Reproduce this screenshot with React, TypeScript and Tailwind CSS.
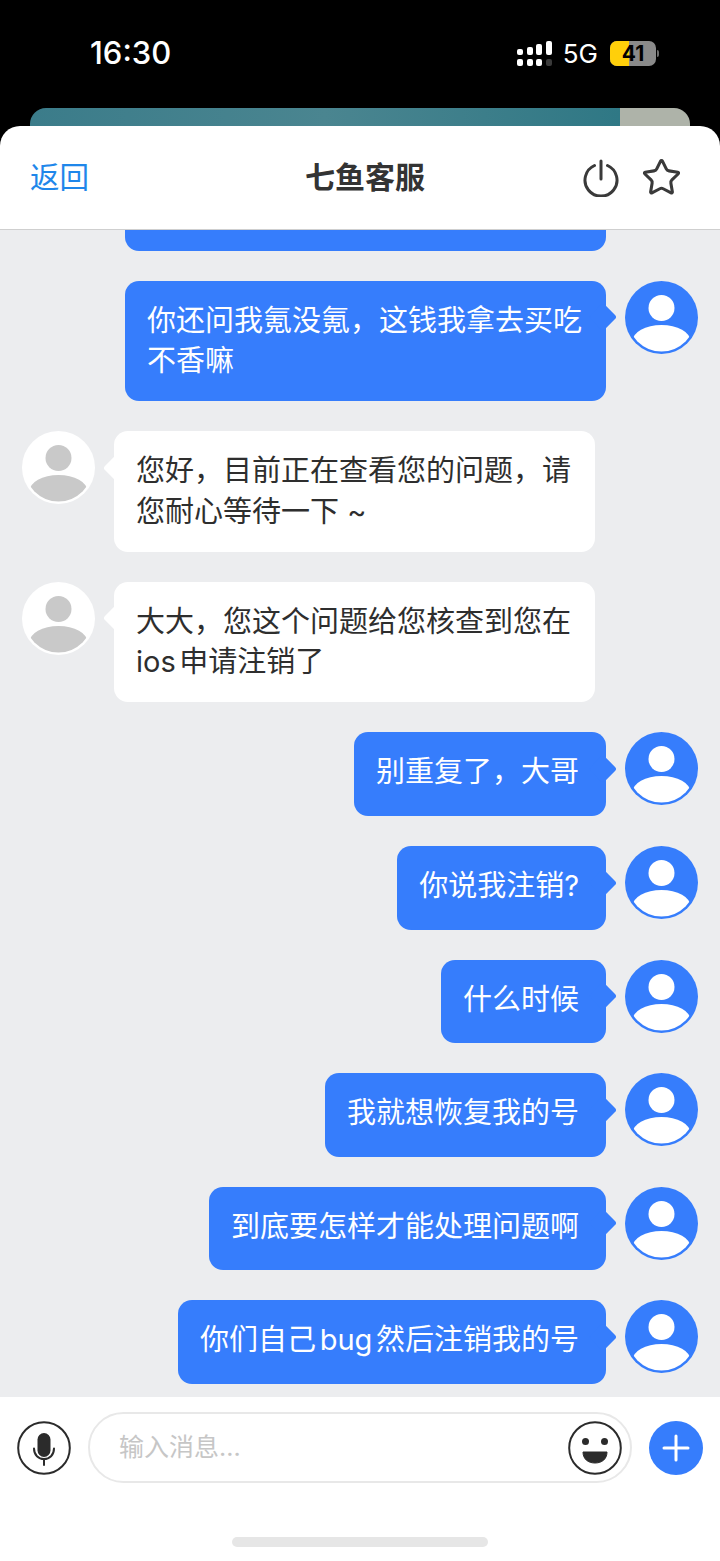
import React from "react";
import { Star } from "lucide-react";

const font = { fontFamily: '"Inter", "Noto Sans CJK SC", sans-serif' };

interface Message {
  id: number;
  from: "me" | "agent";
  text: string;
  full?: boolean;
}

const messages: Message[] = [
  { id: 1, from: "me", text: "你还问我氪没氪，这钱我拿去买吃不香嘛", full: true },
  { id: 2, from: "agent", text: "您好，目前正在查看您的问题，请您耐心等待一下 ~", full: true },
  { id: 3, from: "agent", text: "大大，您这个问题给您核查到您在ios申请注销了", full: true },
  { id: 4, from: "me", text: "别重复了，大哥" },
  { id: 5, from: "me", text: "你说我注销?" },
  { id: 6, from: "me", text: "什么时候" },
  { id: 7, from: "me", text: "我就想恢复我的号" },
  { id: 8, from: "me", text: "到底要怎样才能处理问题啊" },
  { id: 9, from: "me", text: "你们自己bug然后注销我的号" },
];

const Avatar = ({ mine }: { mine: boolean }) => (
  <svg width="73" height="73" viewBox="0 0 73 73" className="shrink-0">
    <defs>
      <clipPath id={mine ? "clip-me" : "clip-agent"}>
        <circle cx="36.5" cy="36.5" r="34" />
      </clipPath>
    </defs>
    <circle cx="36.5" cy="36.5" r="36.5" fill={mine ? "#367dfc" : "#ffffff"} />
    <circle cx="36.5" cy="27" r="13" fill={mine ? "#ffffff" : "#c9c9c9"} />
    <ellipse
      cx="36.5"
      cy="60"
      rx="29"
      ry="16"
      fill={mine ? "#ffffff" : "#c9c9c9"}
      clipPath={mine ? "url(#clip-me)" : "url(#clip-agent)"}
    />
  </svg>
);

const Bubble = ({ message }: { message: Message }) => {
  const mine = message.from === "me";
  return (
    <div className={`flex items-start ${mine ? "justify-end pl-[22px] pr-[22px]" : "pl-[22px]"}`}>
      {!mine && <Avatar mine={false} />}
      <div
        className={`relative min-h-[83.6px] rounded-[14px] pt-[20px] pb-[19.5px] pl-[22px] text-[29px] leading-[40.5px] [text-autospace:normal] ${
          message.full ? "w-[481px]" : "pr-[27px]"
        } ${mine ? "mr-[19px] bg-[#367dfc] text-white" : "ml-[19px] bg-white text-[#2e2e2e]"}`}
      >
        <span
          className={`absolute top-[26.5px] h-[20px] w-[20px] rotate-45 rounded-[3px] ${
            mine ? "right-[-7px] bg-[#367dfc]" : "left-[-7px] bg-white"
          }`}
        />
        <span className="relative">{message.text}</span>
      </div>
      {mine && <Avatar mine={true} />}
    </div>
  );
};

const SignalBars = () => (
  <div className="flex items-end gap-[3.5px]">
    {[6, 8, 11, 14].map((h, i) => (
      <div key={h} className="flex w-[6px] flex-col gap-[4px]">
        <div className="rounded-[2px] bg-white" style={{ height: h }} />
        <div className={`h-[7px] rounded-[2px] ${i === 3 ? "bg-[#3a3a3a]" : "bg-white"}`} />
      </div>
    ))}
  </div>
);

const Battery = () => (
  <div className="flex items-center gap-[1px]">
    <div className="relative h-[25px] w-[46px] overflow-hidden rounded-[7px] bg-[#8a8a8a]">
      <div className="h-full w-[19px] bg-[#ffcf0a]" />
      <span className="absolute inset-0 flex items-center justify-center text-[21px] font-bold leading-none text-black">41</span>
    </div>
    <div className="h-[7px] w-[2px] rounded-r-full bg-[#6e6e6e]" />
  </div>
);

const PowerIcon = () => (
  <svg width="36" height="38" viewBox="0 0 36 38" fill="none" stroke="#3a3a3a" strokeWidth="3" strokeLinecap="round">
    <path d="M11.5 6.5 A16 16 0 1 0 24.5 6.5" />
    <path d="M18 2 V20" />
  </svg>
);

const MicIcon = () => (
  <svg width="54" height="54" viewBox="0 0 54 54" fill="none">
    <circle cx="27" cy="27" r="25.8" stroke="#2b2b2b" strokeWidth="2" />
    <rect x="20.5" y="12" width="13" height="24" rx="6.5" fill="#2b2b2b" />
    <path d="M17 27.5 C17 34 21.5 38 27 38 C32.5 38 37 34 37 27.5" stroke="#2b2b2b" strokeWidth="2" strokeLinecap="round" />
    <path d="M27 38 V44" stroke="#2b2b2b" strokeWidth="2" strokeLinecap="round" />
  </svg>
);

const SmileIcon = () => (
  <svg width="54" height="54" viewBox="0 0 54 54" fill="none">
    <circle cx="27" cy="27" r="25.8" stroke="#2b2b2b" strokeWidth="2" />
    <circle cx="17.5" cy="20.5" r="3.5" fill="#2b2b2b" />
    <circle cx="36.5" cy="20.5" r="3.5" fill="#2b2b2b" />
    <path d="M15 31 H39 C39 38 34 42 27 42 C20 42 15 38 15 31 Z" fill="#2b2b2b" stroke="#2b2b2b" strokeLinejoin="round" />
  </svg>
);

const PlusIcon = () => (
  <svg width="54" height="54" viewBox="0 0 54 54" fill="none">
    <circle cx="27" cy="27" r="27" fill="#367dfc" />
    <path d="M15 27 H39 M27 15 V39" stroke="#ffffff" strokeWidth="3" strokeLinecap="round" />
  </svg>
);

export default function App() {
  return (
    <div style={font} className="flex h-[1561px] w-[720px] flex-col overflow-hidden bg-black">
      {/* status bar */}
      <div className="flex h-[108px] shrink-0 items-start pl-[90px] pr-[61px] pt-[34px] text-white">
        <span className="text-[31px] font-medium leading-[38px]">16:30</span>
        <div className="ml-auto mt-[7px] flex items-center">
          <SignalBars />
          <span className="ml-[11px] mr-[12px] text-[26px] leading-[25px]">5G</span>
          <Battery />
        </div>
      </div>

      {/* card peeking behind the sheet */}
      <div className="mx-[30px] flex h-[18px] shrink-0 overflow-hidden rounded-t-[16px]">
        <div className="flex-1 bg-gradient-to-r from-[#3b7c8a] via-[#4a8590] to-[#2f7885]" />
        <div className="w-[70px] bg-[#aeb3a9]" />
      </div>

      {/* header */}
      <div className="flex h-[104px] shrink-0 items-center rounded-t-[20px] border-b border-[#cfcfcf] bg-white pl-[30px] pr-[39px]">
        <span className="text-[29.5px] text-[#1f87ea]">返回</span>
        <span className="ml-[216px] text-[30px] font-bold text-[#333333]">七鱼客服</span>
        <div className="ml-auto flex items-center gap-[22px]">
          <PowerIcon />
          <Star size={41} strokeWidth={1.8} color="#3a3a3a" className="-mr-[1px]" />
        </div>
      </div>

      {/* chat */}
      <div className="flex min-h-0 flex-1 flex-col justify-end gap-[30px] overflow-hidden bg-[#ecedef] pb-[13px]">
        <div className="flex shrink-0 justify-end pr-[114px]">
          <div className="h-[60px] w-[481px] shrink-0 rounded-[14px] bg-[#367dfc]" />
        </div>
        {messages.map((message) => (
          <div key={message.id} className="shrink-0">
            <Bubble message={message} />
          </div>
        ))}
      </div>

      {/* input bar */}
      <div className="relative h-[164px] shrink-0 bg-white">
        <div className="flex items-center pl-[17px] pr-[17px] pt-[15px]">
          <MicIcon />
          <div className="ml-[17px] flex h-[71px] flex-1 items-center rounded-full border-2 border-[#e8e8e8] pl-[29px] pr-[8px]">
            <span className="text-[25px] text-[#c6c6c6]">输入消息...</span>
            <div className="ml-auto">
              <SmileIcon />
            </div>
          </div>
          <div className="ml-[17px]">
            <PlusIcon />
          </div>
        </div>
        <div className="absolute bottom-[14px] left-[232px] h-[10px] w-[256px] rounded-full bg-[#e6e6e6]" />
      </div>
    </div>
  );
}
